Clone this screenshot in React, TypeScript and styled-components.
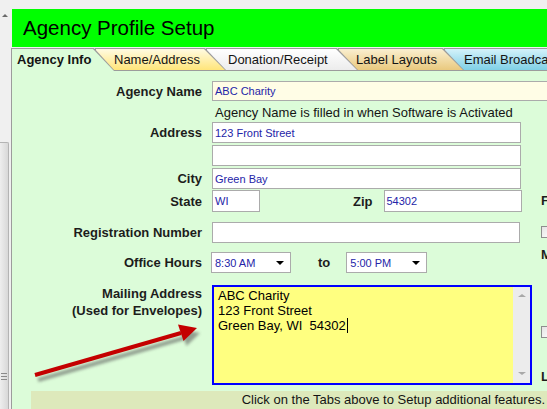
import React from 'react';
import styled, { createGlobalStyle, css } from 'styled-components';

const GlobalStyle = createGlobalStyle`
  html, body {
    margin: 0;
    padding: 0;
    background: #f0f0f0;
  }
  body {
    font-family: "Liberation Sans", Arial, sans-serif;
  }
  #root {
    width: 547px;
    height: 409px;
    overflow: hidden;
  }
`;

const SLANT = 'polygon(0 0, calc(100% - 21px) 0, 100% 100%, 0 100%)';

// --- page frame ---
const Page = styled.div`
  position: relative;
  display: flex;
  width: 547px;
  height: 409px;
  overflow: hidden;
  background: #f0f0f0;
`;

const Rail = styled.div`
  flex: none;
  width: 11px;
  display: flex;
  flex-direction: column;
`;

const RailArrow = styled.div`
  width: 0;
  height: 0;
  margin: 14px 0 0 2px;
  border-left: 3px solid transparent;
  border-right: 3px solid transparent;
  border-bottom: 3px solid #6a6a6a;
`;

const RailThumb = styled.div`
  flex: 1;
  width: 9px;
  margin-top: 125px;
  box-sizing: border-box;
  background: linear-gradient(to right, #eeeeee, #d8d8d8);
  border: 1px solid #b4b4b4;
  border-left: none;
  border-bottom: none;
  border-radius: 0 2px 0 0;
  display: flex;
  flex-direction: column;
  justify-content: flex-end;
  padding-bottom: 29px;
`;

const Grip = styled.div`
  width: 6px;
  height: 7px;
  margin-left: 1px;
  background: repeating-linear-gradient(to bottom, #8a8a8a 0 1px, transparent 1px 3px);
`;

const Main = styled.div`
  flex: 1;
  min-width: 0;
  display: flex;
  flex-direction: column;
  padding-top: 9px;
`;

const Header = styled.div`
  flex: none;
  height: 38px;
  margin-left: 1px;
  padding-left: 11px;
  display: flex;
  align-items: center;
  background: #00ff00;
  color: #000;
  font-size: 20.5px;
  white-space: nowrap;
`;

// --- tabs ---
const TabStrip = styled.div`
  flex: none;
  display: flex;
  height: 22px;
  margin-top: 1px;
  position: relative;
  z-index: 2;
`;

const Tab = styled.div<{ $w: number; $z: number; $first?: boolean; $active?: boolean }>`
  position: relative;
  z-index: ${(p) => p.$z};
  flex: none;
  width: ${(p) => p.$w}px;
  box-sizing: border-box;
  margin-left: ${(p) => (p.$first ? 0 : -20)}px;
  padding: 1px 1px 0 1px;
  background: #9c9c9c;
  clip-path: ${SLANT};
  ${(p) =>
    p.$active &&
    css`
      height: 23px;
      margin-bottom: -1px;
    `}
`;

const TabFace = styled.div<{ $bg: string; $pad: number; $active?: boolean }>`
  height: 100%;
  box-sizing: border-box;
  display: flex;
  align-items: center;
  padding-left: ${(p) => p.$pad}px;
  padding-bottom: ${(p) => (p.$active ? 1 : 0)}px;
  background: ${(p) => p.$bg};
  clip-path: ${SLANT};
  font-size: 13px;
  font-weight: ${(p) => (p.$active ? 700 : 400)};
  color: #141414;
  white-space: nowrap;
`;

// --- panel and form ---
const Panel = styled.div`
  flex: 1;
  position: relative;
  z-index: 1;
  display: flex;
  flex-direction: column;
  background: #dcfcd9;
  border-top: 1px solid #9c9c9c;
  border-left: 1px solid #9c9c9c;
  overflow: hidden;
`;

const Row = styled.div<{ $mt: number; $h: number }>`
  display: grid;
  grid-template-columns: 190px 320px 1fr;
  column-gap: 10px;
  height: ${(p) => p.$h}px;
  margin-top: ${(p) => p.$mt}px;
  flex: none;
`;

const Label = styled.div<{ $top?: boolean }>`
  align-self: ${(p) => (p.$top ? 'start' : 'center')};
  text-align: right;
  font-size: 13px;
  line-height: 17px;
  font-weight: 700;
  color: #1c1c1c;
  white-space: nowrap;
`;

const Field = styled.div<{ $w: number; $bg?: string; $span?: boolean }>`
  ${(p) => p.$span && 'grid-column: 2 / 4;'}
  width: ${(p) => p.$w}px;
  height: 100%;
  box-sizing: border-box;
  display: flex;
  align-items: center;
  padding-left: 2px;
  background: ${(p) => p.$bg || '#ffffff'};
  border: 1px solid #ababab;
  font-size: 11px;
  color: #2424a8;
  white-space: nowrap;
`;

const Note = styled.div`
  grid-column: 2 / 4;
  align-self: center;
  padding-left: 3px;
  font-size: 13px;
  color: #141414;
  white-space: nowrap;
`;

const Inline = styled.div`
  display: flex;
  align-items: center;
  height: 100%;
`;

const InlineLabel = styled.div<{ $ml: number }>`
  margin-left: ${(p) => p.$ml}px;
  margin-right: 11px;
  font-size: 13px;
  font-weight: 700;
  color: #1c1c1c;
`;

const Select = styled.div<{ $w: number; $ml?: number }>`
  width: ${(p) => p.$w}px;
  height: 100%;
  margin-left: ${(p) => p.$ml ?? 0}px;
  box-sizing: border-box;
  display: flex;
  align-items: center;
  justify-content: space-between;
  padding: 0 6px 0 3px;
  background: #ffffff;
  border: 1px solid #ababab;
  font-size: 11px;
  color: #2424a8;
`;

const DropCaret = styled.span`
  width: 0;
  height: 0;
  border-left: 4px solid transparent;
  border-right: 4px solid transparent;
  border-top: 4px solid #000;
`;

const RightCol = styled.div`
  margin-left: -1px;
  display: flex;
  flex-direction: column;
`;

const RightLabel = styled.div<{ $mt?: number }>`
  margin-top: ${(p) => p.$mt ?? 0}px;
  font-size: 13px;
  line-height: 15px;
  font-weight: 700;
  color: #1c1c1c;
`;

const Check = styled.div<{ $mt?: number }>`
  width: 12px;
  height: 12px;
  box-sizing: border-box;
  margin-top: ${(p) => p.$mt ?? 0}px;
  border: 1px solid #8e8e8e;
  background: linear-gradient(135deg, #e4e4e4, #ffffff);
`;

const MailBox = styled.div`
  width: 320px;
  height: 100%;
  box-sizing: border-box;
  display: flex;
  border: 2px solid #0000ff;
  background: #ffff80;
`;

const MailText = styled.div`
  flex: 1;
  padding: 1px 4px;
  font-size: 13px;
  line-height: 15px;
  color: #000;
  white-space: pre;
`;

const TextCaret = styled.span`
  display: inline-block;
  width: 1px;
  height: 15px;
  margin-left: 1px;
  vertical-align: -3px;
  background: #000;
`;

const MailScroll = styled.div`
  flex: none;
  width: 17px;
  display: flex;
  flex-direction: column;
  align-items: center;
  justify-content: space-between;
  padding: 7px 0 8px;
  box-sizing: border-box;
  background: #ececec;
`;

const ScrollArrow = styled.span<{ $down?: boolean }>`
  width: 0;
  height: 0;
  border-left: 4px solid transparent;
  border-right: 4px solid transparent;
  ${(p) => (p.$down ? 'border-top: 3px solid #a8a8a8;' : 'border-bottom: 3px solid #a8a8a8;')}
`;

const Footer = styled.div`
  flex: none;
  height: 18px;
  margin: 6px 0 0 19px;
  padding-right: 2px;
  background: #dde9bb;
  font-size: 13px;
  line-height: 18px;
  text-align: right;
  color: #141414;
  white-space: nowrap;
`;

const ArrowArt = styled.svg`
  position: absolute;
  left: 30px;
  top: 318px;
  z-index: 5;
  overflow: visible;
`;

const tabs = [
  { label: 'Agency Info', w: 104, pad: 5, bg: '#dcfcd9', active: true },
  { label: 'Name/Address', w: 131, pad: 18, bg: 'linear-gradient(#fffbe2, #ffe57a)' },
  { label: 'Donation/Receipt', w: 152, pad: 21, bg: 'linear-gradient(#ffffff, #ececec)' },
  { label: 'Label Layouts', w: 126, pad: 17, bg: 'linear-gradient(#faefd0, #e9c97e)' },
  { label: 'Email Broadcast', w: 200, pad: 19, bg: 'linear-gradient(#d4f2fa, #7fd0e6)' },
];

export default function App() {
  return (
    <>
      <GlobalStyle />
      <Page>
        <Rail>
          <RailArrow />
          <RailThumb>
            <Grip />
          </RailThumb>
        </Rail>

        <Main>
          <Header>Agency Profile Setup</Header>

          <TabStrip>
            {tabs.map((t, i) => (
              <Tab key={t.label} $w={t.w} $z={10 - i} $first={i === 0} $active={t.active}>
                <TabFace $bg={t.bg} $pad={t.pad} $active={t.active}>
                  {t.label}
                </TabFace>
              </Tab>
            ))}
          </TabStrip>

          <Panel>
            <Row $mt={10} $h={20}>
              <Label>Agency Name</Label>
              <Field $w={345} $bg="#fffde6" $span>ABC Charity</Field>
            </Row>
            <Row $mt={2} $h={18}>
              <div />
              <Note>Agency Name is filled in when Software is Activated</Note>
            </Row>
            <Row $mt={1} $h={21}>
              <Label>Address</Label>
              <Field $w={309}>123 Front Street</Field>
            </Row>
            <Row $mt={2} $h={21}>
              <div />
              <Field $w={309} />
            </Row>
            <Row $mt={2} $h={21}>
              <Label>City</Label>
              <Field $w={309}>Green Bay</Field>
            </Row>
            <Row $mt={1} $h={22}>
              <Label>State</Label>
              <Inline>
                <Field $w={48}>WI</Field>
                <InlineLabel $ml={93}>Zip</InlineLabel>
                <Field $w={138}>54302</Field>
              </Inline>
              <RightCol>
                <RightLabel $mt={3}>F</RightLabel>
              </RightCol>
            </Row>
            <Row $mt={10} $h={21}>
              <Label>Registration Number</Label>
              <Field $w={308} />
              <RightCol>
                <Check $mt={4} />
              </RightCol>
            </Row>
            <Row $mt={9} $h={21}>
              <Label>Office Hours</Label>
              <Inline>
                <Select $w={80} $ml={-1}>
                  8:30 AM
                  <DropCaret />
                </Select>
                <InlineLabel $ml={27}>to</InlineLabel>
                <Select $w={81} $ml={5}>
                  5:00 PM
                  <DropCaret />
                </Select>
              </Inline>
              <RightCol>
                <RightLabel $mt={-5}>M</RightLabel>
              </RightCol>
            </Row>
            <Row $mt={12} $h={100}>
              <Label $top>
                Mailing Address
                <br />
                (Used for Envelopes)
              </Label>
              <MailBox>
                <MailText>
                  {'ABC Charity\n123 Front Street\nGreen Bay, WI  54302'}
                  <TextCaret />
                </MailText>
                <MailScroll>
                  <ScrollArrow />
                  <ScrollArrow $down />
                </MailScroll>
              </MailBox>
              <RightCol>
                <Check $mt={41} />
                <RightLabel $mt={31}>L</RightLabel>
              </RightCol>
            </Row>
            <Footer>Click on the Tabs above to Setup additional features.</Footer>
          </Panel>
        </Main>

        <ArrowArt width="175" height="70" viewBox="0 0 175 70">
          <defs>
            <filter id="arrowShadow" x="-20%" y="-50%" width="140%" height="200%">
              <feGaussianBlur stdDeviation="1.6" />
            </filter>
          </defs>
          <g transform="translate(3 5)" filter="url(#arrowShadow)" fill="#555" stroke="#555" opacity="0.55">
            <line x1="5" y1="57" x2="151" y2="15" strokeWidth="4" />
            <polygon points="167,10 148,6.5 153.5,23" stroke="none" />
          </g>
          <line x1="5" y1="57" x2="151" y2="15" stroke="#c40000" strokeWidth="4" />
          <polygon points="167,10 148,6.5 153.5,23" fill="#c40000" />
        </ArrowArt>
      </Page>
    </>
  );
}
